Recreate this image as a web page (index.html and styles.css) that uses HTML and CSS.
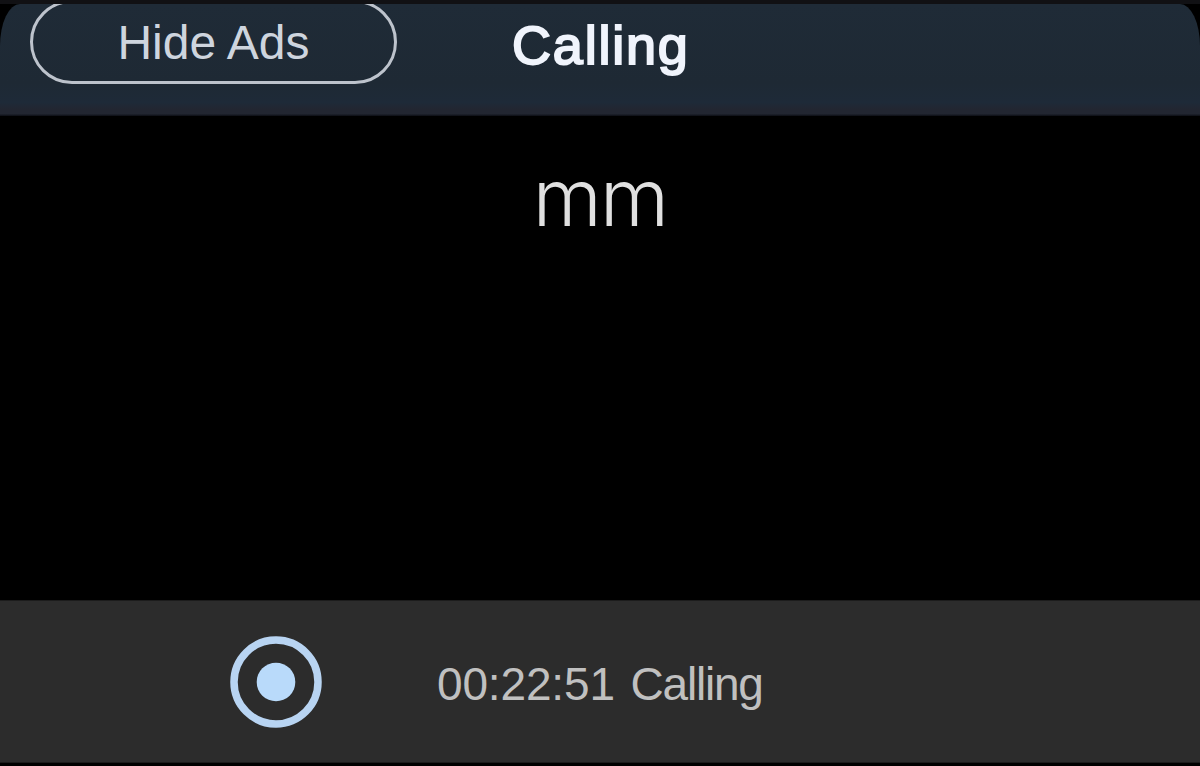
FILE: index.html
```html
<!DOCTYPE html>
<html lang="en">
<head>
<meta charset="utf-8">
<title>Calling</title>
<link rel="stylesheet" href="styles.css">
</head>
<body>
<main class="screen">
  <header class="navbar">
    <button class="hide-ads">Hide Ads</button>
    <h1 class="title">Calling</h1>
  </header>
  <section class="call">
    <p class="contact">mm</p>
  </section>
  <footer class="status">
    <svg class="record" viewBox="0 0 94 94" aria-label="Record">
      <circle cx="47" cy="47" r="42" fill="none" stroke="#b8d4f2" stroke-width="7.5"/>
      <circle cx="47" cy="47" r="19.3" fill="#b9dafa"/>
    </svg>
    <p class="timer">00:22:51 <span class="state">Calling</span></p>
  </footer>
</main>
</body>
</html>
```
FILE: styles.css
```css
* { box-sizing: border-box; }

body {
  margin: 0;
  background: #000;
  font-family: "Liberation Sans", Arial, sans-serif;
}

.screen {
  display: flex;
  flex-direction: column;
  width: 1200px;
  height: 766px;
  overflow: hidden;
  border-top: 4px solid #111114;
  background: #000;
}

.navbar {
  display: grid;
  grid-template-columns: 367px 1fr;
  column-gap: 115px;
  align-items: start;
  height: 112px;
  padding-left: 30px;
  overflow: hidden;
  border-radius: 20px 20px 0 0 / 42px 42px 0 0;
  background: linear-gradient(#1f2b37 0, #1e2934 70%, #1e2a38 88%, #222631 94%, #222631 98%, #0c0e14 100%);
}

.hide-ads {
  height: 84px;
  margin-top: -4px;
  padding: 2px 0 0;
  border: 3px solid #bdc3cc;
  border-radius: 42px;
  background: none;
  color: #ced5de;
  font: 48px/76px "Liberation Sans", Arial, sans-serif;
}

.title {
  margin: 9px 0 0;
  color: #f0f4fc;
  font-size: 54px;
  font-weight: 400;
  letter-spacing: 1.8px;
  line-height: 64px;
  -webkit-text-stroke: 2px #f0f4fc;
}

.call {
  flex: 1;
  padding-top: 35px;
  text-align: center;
}

.contact {
  margin: 0;
  color: #e0e0e0;
  font-family: Inter, "Liberation Sans", sans-serif;
  font-size: 79px;
  font-weight: 300;
  letter-spacing: -1.6px;
  line-height: 92px;
}

.status {
  display: flex;
  align-items: center;
  gap: 114px;
  height: 163px;
  margin-bottom: 3px;
  padding-left: 229px;
  border-top: 1px solid #1c1c1c;
  border-bottom: 1px solid #1c1c1c;
  background: #2c2c2c;
}

.record {
  width: 94px;
  height: 94px;
}

.timer {
  margin: 4px 0 0;
  color: #c0c0c0;
  font-size: 46px;
  letter-spacing: -0.15px;
  line-height: 54px;
  white-space: nowrap;
}

.state {
  margin-left: 3px;
  letter-spacing: -1.2px;
}
```
